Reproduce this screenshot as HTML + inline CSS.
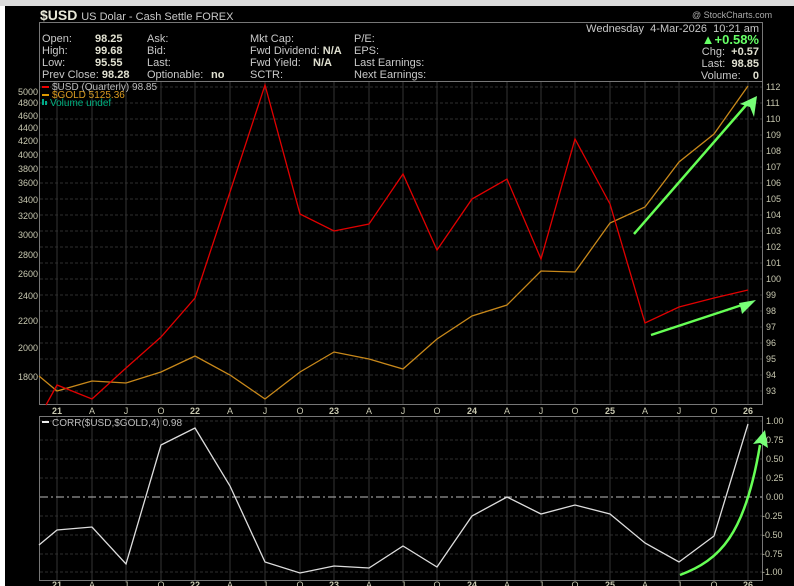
<!DOCTYPE html>
<html><head><meta charset="utf-8"><style>
body{margin:0;width:794px;height:586px;overflow:hidden;background:#fff;font-family:"Liberation Sans",sans-serif}
#bg{position:absolute;left:0;top:0;width:794px;height:6px;background:#dcdcdc}
#blk{position:absolute;left:5px;top:6px;width:789px;height:580px;background:#000}
.t{position:absolute;font-size:11px;color:#c8c8c8;white-space:nowrap;line-height:12px}
.b{font-weight:bold;color:#e0e0d0}
</style></head><body>
<div id="bg"></div><div id="blk"></div>
<div class="t" style="left:40px;top:9px;font-size:14px;font-weight:bold;color:#e8e8d8">$USD <span style="font-size:11px;font-weight:normal;color:#c8c8c8">US Dolar - Cash Settle FOREX</span></div>
<div class="t" style="left:692px;top:9px;font-size:9px;color:#aaa">@ StockCharts.com</div>
<div class="t" style="left:42px;top:33px">Open:</div><div class="t b" style="left:95px;top:33px">98.25</div>
<div class="t" style="left:42px;top:45px">High:</div><div class="t b" style="left:95px;top:45px">99.68</div>
<div class="t" style="left:42px;top:57px">Low:</div><div class="t b" style="left:95px;top:57px">95.55</div>
<div class="t" style="left:42px;top:69px">Prev Close: <span class="b">98.28</span></div>
<div class="t" style="left:147px;top:33px">Ask:</div><div class="t" style="left:147px;top:45px">Bid:</div><div class="t" style="left:147px;top:57px">Last:</div>
<div class="t" style="left:147px;top:69px">Optionable:</div><div class="t b" style="left:211px;top:69px">no</div>
<div class="t" style="left:250px;top:33px">Mkt Cap:</div>
<div class="t" style="left:250px;top:45px">Fwd Dividend: <span class="b">N/A</span></div>
<div class="t" style="left:250px;top:57px">Fwd Yield:</div><div class="t b" style="left:313px;top:57px">N/A</div>
<div class="t" style="left:250px;top:69px">SCTR:</div>
<div class="t" style="left:354px;top:33px">P/E:</div><div class="t" style="left:354px;top:45px">EPS:</div>
<div class="t" style="left:354px;top:57px">Last Earnings:</div><div class="t" style="left:354px;top:69px">Next Earnings:</div>
<div class="t" style="right:35px;top:23px">Wednesday&nbsp; 4-Mar-2026&nbsp; 10:21 am</div>
<div class="t" style="right:35px;top:34px;font-size:13px;font-weight:bold;color:#66ff66">▲+0.58%</div>
<div class="t" style="right:35px;top:46px">Chg:&nbsp; <span class="b">+0.57</span></div>
<div class="t" style="right:35px;top:58px">Last:&nbsp; <span class="b">98.85</span></div>
<div class="t" style="right:35px;top:70px">Volume:&nbsp;&nbsp;&nbsp; <span class="b">0</span></div>
<svg width="794" height="586" style="position:absolute;left:0;top:0" font-family="Liberation Sans,sans-serif" font-size="9" fill="#c8c8b0">
<rect x="39.5" y="22.5" width="723" height="382" fill="none" stroke="#777"/>
<line x1="39" y1="81.5" x2="762" y2="81.5" stroke="#777"/>
<rect x="39.5" y="416.5" width="723" height="164" fill="none" stroke="#777"/>
<g stroke="#2e2e2e" stroke-dasharray="3,2">
<path d="M40 87H762M40 103H762M40 119H762M40 135H762M40 151H762M40 167H762M40 183H762M40 199H762M40 215H762M40 231H762M40 247H762M40 263H762M40 279H762M40 295H762M40 311H762M40 327H762M40 343H762M40 359H762M40 375H762M40 391H762"/>
<path d="M40 421H762M40 440H762M40 459H762M40 478H762M40 516H762M40 535H762M40 554H762M40 572H762"/>
</g>
<g stroke="#333">
<path d="M57 82V404M92 82V404M126 82V404M161 82V404M195 82V404M230 82V404M265 82V404M300 82V404M334 82V404M369 82V404M403 82V404M437 82V404M472 82V404M507 82V404M541 82V404M575 82V404M610 82V404M645 82V404M679 82V404M714 82V404M748 82V404"/>
<path d="M57 417V580M92 417V580M126 417V580M161 417V580M195 417V580M230 417V580M265 417V580M300 417V580M334 417V580M369 417V580M403 417V580M437 417V580M472 417V580M507 417V580M541 417V580M575 417V580M610 417V580M645 417V580M679 417V580M714 417V580M748 417V580"/>
</g>
<line x1="40" y1="497" x2="762" y2="497" stroke="#bbb" stroke-dasharray="8,3,2,3"/>
<g text-anchor="end">
<text x="38" y="95">5000</text><text x="38" y="106">4800</text><text x="38" y="119">4600</text><text x="38" y="131">4400</text><text x="38" y="144">4200</text><text x="38" y="158">4000</text><text x="38" y="172">3800</text><text x="38" y="186">3600</text><text x="38" y="203">3400</text><text x="38" y="219">3200</text><text x="38" y="238">3000</text><text x="38" y="258">2800</text><text x="38" y="277">2600</text><text x="38" y="299">2400</text><text x="38" y="324">2200</text><text x="38" y="351">2000</text><text x="38" y="380">1800</text>
</g>
<g>
<text x="766" y="90">112</text><text x="766" y="106">111</text><text x="766" y="122">110</text><text x="766" y="138">109</text><text x="766" y="154">108</text><text x="766" y="170">107</text><text x="766" y="186">106</text><text x="766" y="202">105</text><text x="766" y="218">104</text><text x="766" y="234">103</text><text x="766" y="250">102</text><text x="766" y="266">101</text><text x="766" y="282">100</text><text x="766" y="298">99</text><text x="766" y="314">98</text><text x="766" y="330">97</text><text x="766" y="346">96</text><text x="766" y="362">95</text><text x="766" y="378">94</text><text x="766" y="394">93</text>
<text x="766" y="424">1.00</text><text x="766" y="443">0.75</text><text x="766" y="462">0.50</text><text x="766" y="481">0.25</text><text x="766" y="500">0.00</text><text x="762" y="519">-0.25</text><text x="762" y="538">-0.50</text><text x="762" y="557">-0.75</text><text x="762" y="575">-1.00</text>
</g>
<g text-anchor="middle" font-size="9">
<text x="57" y="414" font-weight="bold">21</text><text x="92" y="414">A</text><text x="126" y="414">J</text><text x="161" y="414">O</text><text x="195" y="414" font-weight="bold">22</text><text x="230" y="414">A</text><text x="265" y="414">J</text><text x="300" y="414">O</text><text x="334" y="414" font-weight="bold">23</text><text x="369" y="414">A</text><text x="403" y="414">J</text><text x="437" y="414">O</text><text x="472" y="414" font-weight="bold">24</text><text x="507" y="414">A</text><text x="541" y="414">J</text><text x="575" y="414">O</text><text x="610" y="414" font-weight="bold">25</text><text x="645" y="414">A</text><text x="679" y="414">J</text><text x="714" y="414">O</text><text x="748" y="414" font-weight="bold">26</text>
<text x="57" y="588" font-weight="bold">21</text><text x="92" y="588">A</text><text x="126" y="588">J</text><text x="161" y="588">O</text><text x="195" y="588" font-weight="bold">22</text><text x="230" y="588">A</text><text x="265" y="588">J</text><text x="300" y="588">O</text><text x="334" y="588" font-weight="bold">23</text><text x="369" y="588">A</text><text x="403" y="588">J</text><text x="437" y="588">O</text><text x="472" y="588" font-weight="bold">24</text><text x="507" y="588">A</text><text x="541" y="588">J</text><text x="575" y="588">O</text><text x="610" y="588" font-weight="bold">25</text><text x="645" y="588">A</text><text x="679" y="588">J</text><text x="714" y="588">O</text><text x="748" y="588" font-weight="bold">26</text>
</g>
<g font-size="10">
<rect x="42" y="86" width="7" height="2" fill="#e00"/><text x="52" y="90" fill="#bbb">$USD (Quarterly) 98.85</text>
<rect x="42" y="94" width="7" height="2" fill="#d90"/><text x="52" y="98" fill="#d99a20">$GOLD 5125.36</text>
<rect x="42" y="99" width="2" height="6" fill="#0a8"/><rect x="45" y="101" width="2" height="4" fill="#0a8"/><text x="50" y="106" fill="#00b080">Volume undef</text>
<rect x="42" y="421" width="7" height="2" fill="#eee"/><text x="52" y="426" fill="#bbb">CORR($USD,$GOLD,4) 0.98</text>
</g>
<polyline fill="none" stroke="#c8881a" stroke-width="1.3" points="39,376 57,391 92,381 126,383 161,372 195,356 230,375 265,399 300,372 334,352 369,359 403,369 437,339 472,316 507,305 541,271 575,272 610,223 645,207 679,162 714,134 748,86"/>
<polyline fill="none" stroke="#e00000" stroke-width="1.3" points="46,405 57,385 92,399 126,368 161,337 195,298 230,192 265,85 300,214 334,231 369,224 403,174 437,250 472,199 507,179 541,259 575,139 610,204 645,323 679,307 714,298 748,290"/>
<polyline fill="none" stroke="#ddd" stroke-width="1.3" points="39,545 57,530 92,527 126,564 161,445 195,428 230,486 265,562 300,573 334,566 369,568 403,546 437,567 472,516 507,497 541,514 575,505 610,514 645,543 679,562 714,536 748,424"/>
<g stroke="#66ff55" stroke-width="2.5" fill="none">
<line x1="634" y1="234" x2="748" y2="103"/>
<line x1="651" y1="335" x2="745" y2="304"/>
<path d="M680 575 C720 560 745 535 760 445"/>
</g>
<g fill="#77ff77">
<polygon points="757,96 740,104 750,107 754,117"/>
<polygon points="756,300 739,303 741,309 742,314"/>
<polygon points="765,430 753,444 760,443 768,448"/>
</g>
</svg>
</body></html>
